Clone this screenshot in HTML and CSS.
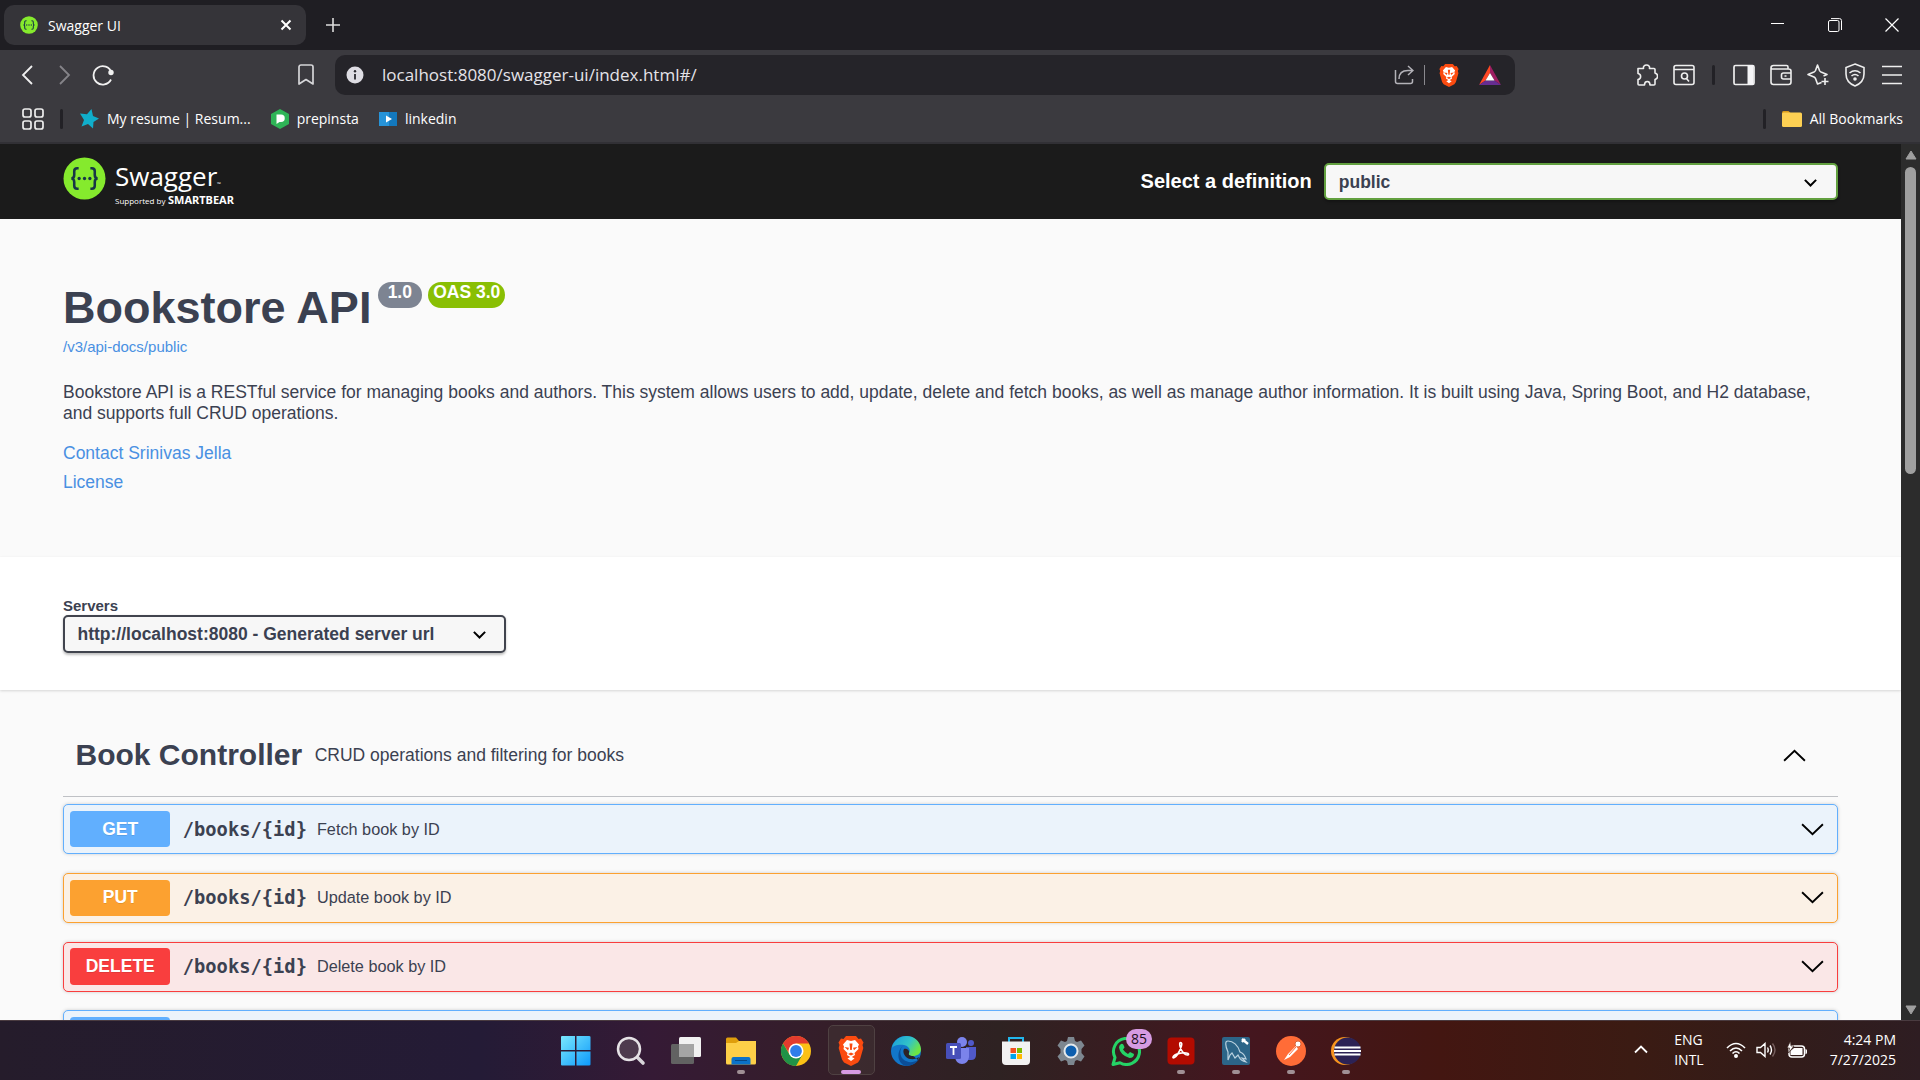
FILE: index.html
```html
<!DOCTYPE html>
<html lang="en">
<head>
<meta charset="utf-8">
<title>Swagger UI</title>
<link rel="stylesheet" href="styles.css">
</head>
<body>
<svg class="defs" width="0" height="0" aria-hidden="true">
  <symbol id="swagger-mark" viewBox="0 0 44 44">
    <circle cx="22" cy="22" r="21.500" fill="#85ea2d"/>
    <path d="M16 11.500h-1.500c-2 0-3 1-3 3v4c0 2-1 3.500-3 3.500 2 0 3 1.500 3 3.500v4c0 2 1 3 3 3H16M28 11.500h1.500c2 0 3 1 3 3v4c0 2 1 3.500 3 3.500-2 0-3 1.500-3 3.500v4c0 2-1 3-3 3H28" fill="none" stroke="#173647" stroke-width="2.600"/>
    <circle cx="16.500" cy="22" r="1.700" fill="#173647"/><circle cx="22" cy="22" r="1.700" fill="#173647"/><circle cx="27.500" cy="22" r="1.700" fill="#173647"/>
  </symbol>
  <symbol id="brave" viewBox="0 0 26 30">
    <path d="M8 0h10l2.500 3 2.500-.5 2.500 4-1 2.500.8 3L22 23.500l-2 3L13 30l-7-3.500-2-3L.7 12l.8-3-1-2.500 2.500-4 2.500.5z" fill="#fb4b10"/>
    <path d="M13 5l4-1 4 4.500-1 2 .5 2.500-4 4 .5 2-4 2.500-4-2.500.5-2-4-4 .5-2.500-1-2L9 4z" fill="#fff"/>
    <path d="M6.500 11l4.500.8-1 2.500zM19.500 11l-4.500.8 1 2.500zM11.500 7.500h3L13.800 14h-1.600zM10 18l3-1.500 3 1.500-3 1.500z" fill="#fb4b10"/>
    <path d="M9.500 22.500l3.500-2 3.500 2L13 25z" fill="#fff"/>
  </symbol>
  <symbol id="arrow-down" viewBox="0 0 24 14"><path d="M2 2l10 9.500L22 2" fill="none" stroke="#000" stroke-width="1.800"/></symbol>
  <symbol id="caret" viewBox="0 0 12 8"><path d="M1.500 1.500L6 6l4.500-4.500" fill="none" stroke="#000" stroke-width="1.600"/></symbol>
</svg>

<header class="browser">
  <div class="tabs">
    <div class="tab">
      <svg class="favicon" width="18" height="18"><use href="#swagger-mark"/></svg>
      <span class="tab-title">Swagger UI</span>
      <button class="tab-close" aria-label="Close tab"><svg width="12" height="12" viewBox="0 0 12 12"><path d="M1.500 1.500l9 9M10.500 1.500l-9 9" stroke="#fff" stroke-width="2"/></svg></button>
    </div>
    <button class="new-tab" aria-label="New tab"><svg width="14" height="14" viewBox="0 0 14 14"><path d="M7 0v14M0 7h14" stroke="#ddd" stroke-width="1.600"/></svg></button>
    <div class="window-controls">
      <button aria-label="Minimize"><svg width="14" height="14" viewBox="0 0 14 14"><path d="M0 5.500h13" stroke="#fff"/></svg></button>
      <button aria-label="Restore"><svg width="14" height="14" viewBox="0 0 14 14" fill="none" stroke="#fff"><rect x=".5" y="2.500" width="10.500" height="11" rx="1.500"/><path d="M3 .6h8.500a2 2 0 0 1 2 2V12"/></svg></button>
      <button aria-label="Close"><svg width="14" height="14" viewBox="0 0 14 14"><path d="M.5.500l13 13M13.500.500l-13 13" stroke="#fff" stroke-width="1.200"/></svg></button>
    </div>
  </div>

  <div class="toolbar">
    <div class="nav">
      <button aria-label="Back"><svg width="12" height="20" viewBox="0 0 12 20"><path d="M11 1L2 10l9 9" fill="none" stroke="#f0f0f0" stroke-width="1.800"/></svg></button>
      <button aria-label="Forward"><svg width="12" height="20" viewBox="0 0 12 20"><path d="M1 1l9 9-9 9" fill="none" stroke="#858489" stroke-width="1.800"/></svg></button>
      <button aria-label="Reload"><svg width="22" height="22" viewBox="0 0 22 22"><path d="M19.500 8.500A9.200 9.200 0 1 0 19 15.500" fill="none" stroke="#f0f0f0" stroke-width="1.800"/><circle cx="19" cy="8.500" r="2.700" fill="#f0f0f0"/></svg></button>
      <button class="bookmark" aria-label="Bookmark this tab"><svg width="16" height="22" viewBox="0 0 16 22"><path d="M1 20V3a2 2 0 0 1 2-2h10a2 2 0 0 1 2 2v17l-7-4.500z" fill="none" stroke="#d5d5d8" stroke-width="1.700" stroke-linejoin="round"/></svg></button>
    </div>
    <div class="address">
      <svg width="18" height="18" viewBox="0 0 18 18"><circle cx="9" cy="9" r="8.500" fill="#dedde3"/><path d="M9 8v5.500" stroke="#29282d" stroke-width="1.800"/><circle cx="9" cy="5.300" r="1.200" fill="#29282d"/></svg>
      <input type="text" aria-label="Address" value="localhost:8080/swagger-ui/index.html#/">
      <button aria-label="Share"><svg width="20" height="20" viewBox="0 0 20 20" fill="none" stroke="#b3b2b8" stroke-width="1.500"><path d="M1.500 5v11.500a2 2 0 0 0 2 2h13a2 2 0 0 0 2-2V14M5 14c0-5 3-8.500 9-8.500h5M14 1l5 4.500-5 4.500"/></svg></button>
      <span class="address-rule"></span>
      <button class="shields" aria-label="Brave Shields"><svg width="20" height="23"><use href="#brave"/></svg></button>
      <button class="rewards" aria-label="Rewards"><svg width="22" height="20" viewBox="0 0 22 20"><path d="M11 0L0 20l6.500-4.500L11 8z" fill="#ff4724"/><path d="M11 0l11 20-6.500-4.500L11 8z" fill="#9e1f63"/><path d="M0 20h22l-6.500-4.500h-9z" fill="#662d91"/><path d="M11 8l4.500 7.500h-9z" fill="#fff"/></svg></button>
    </div>
    <div class="actions">
      <button aria-label="Extensions"><svg width="22" height="22" viewBox="0 0 22 22" fill="none" stroke="#eee" stroke-width="1.600" stroke-linejoin="round"><path d="M2 4.500h5.500C7 2.500 8.500 1 10.500 1S14 2.500 13.500 4.500H18q1 0 1 1V9c3.500 1 3.500 5.500 0 6.500V20q0 1-1 1h-4c0-2.500-1-3.500-2.700-3.500S8.500 18.500 8.500 21H3q-1 0-1-1v-4.500c3.500-.5 3.500-5.500 0-6z"/></svg></button>
      <button aria-label="Search tabs"><svg width="22" height="22" viewBox="0 0 22 22" fill="none" stroke="#eee" stroke-width="1.600"><rect x="1" y="1.500" width="20" height="19" rx="2"/><path d="M1 5.500h20M13.500 14.500l2.500 3"/><circle cx="11.500" cy="12" r="3"/></svg></button>
      <span class="rule"></span>
      <button aria-label="Sidebar"><svg width="22" height="22" viewBox="0 0 22 22"><rect x="1" y="1.500" width="20" height="19" rx="1.500" fill="none" stroke="#eee" stroke-width="1.700"/><path d="M14.500 1h6v20h-6z" fill="#f5f5f7"/></svg></button>
      <button aria-label="Wallet"><svg width="22" height="22" viewBox="0 0 22 22" fill="none" stroke="#eee" stroke-width="1.600"><path d="M18 5V3q0-1.500-1.500-1.500h-13Q1 1.500 1 4v14q0 2.500 2.500 2.500h15q2.500 0 2.500-2.500V7q0-2-2.500-2H3Q1.500 5 1 4M21 9h-7.500q-2 0-2 2v2q0 2 2 2H21M14.500 12h2"/></svg></button>
      <button aria-label="Leo AI"><svg width="22" height="22" viewBox="0 0 22 22" fill="none" stroke="#eee" stroke-width="1.600" stroke-linejoin="round"><path d="M14.500 18.500L10.500 20 8.500 14.500Q8 13.500 7 13L1 10.500 7 8q1-.5 1.500-1.500l2-5.500 2 5.500Q13 7.500 14 8l6 2.500-3.500 1.500M18 14v7M14.500 17.500h7"/></svg></button>
      <button aria-label="VPN"><svg width="22" height="24" viewBox="0 0 22 24" fill="none" stroke="#eee" stroke-width="1.600"><path d="M11 1l9 3.500V11c0 6-4 10-9 12C6 21 2 17 2 11V4.500zM5.500 10q5.500-4.500 11 0M7.500 13q3.500-3 7 0"/><circle cx="11" cy="16" r="1" fill="#eee"/></svg></button>
      <button aria-label="Menu"><svg width="22" height="20" viewBox="0 0 22 20"><path d="M1 1.500h20M1 10h20M1 18.500h20" stroke="#eee" stroke-width="1.700"/></svg></button>
    </div>
  </div>

  <nav class="bookmarks">
    <button class="apps" aria-label="Apps"><svg width="22" height="22" viewBox="0 0 22 22" fill="none" stroke="#eee" stroke-width="1.700"><rect x="1" y="1" width="8" height="8" rx="2"/><rect x="13" y="1" width="8" height="8" rx="2"/><rect x="1" y="13" width="8" height="8" rx="2"/><rect x="13" y="13" width="8" height="8" rx="2"/></svg></button>
    <span class="rule"></span>
    <a href="#resume"><svg width="20" height="20" viewBox="0 0 20 20"><path d="M12.500 0l1.500 7 6 2.500-5.500 3.500-.5 6.500-5-4.500-6.500 2.500L5 11 1 4.500l7 .8z" fill="#10aecb"/></svg>My resume | Resum...</a>
    <a href="#prepinsta"><svg width="18" height="20" viewBox="0 0 18 20"><path d="M9 0l9 5v10l-9 5-9-5V5z" fill="#2fb457"/><path d="M5.500 5.500H10a3.500 3.500 0 0 1 0 7.500H8.500L5.500 15z" fill="#fff"/></svg>prepinsta</a>
    <a href="#linkedin"><svg width="18" height="14" viewBox="0 0 18 14"><path d="M0 0h18v14H0z" fill="#1378bd"/><path d="M0 0h10v14H0z" fill="#2793d8"/><path d="M7 3.500l6 3.500-6 3.500z" fill="#fff"/></svg>linkedin</a>
    <span class="rule push"></span>
    <a class="all" href="#bookmarks"><svg width="20" height="16" viewBox="0 0 20 16"><path d="M0 1.500Q0 0 1.500 0h5L8.500 2v4H0z" fill="#d99b1c"/><rect y="1.500" width="20" height="14.500" rx="1.500" fill="#fdd053"/></svg>All Bookmarks</a>
  </nav>
</header>

<div class="viewport">
  <main class="swagger">
    <div class="topbar">
      <div class="wrapper topbar-row">
        <a class="logo" href="#/" aria-label="Swagger">
          <svg width="144" height="44" viewBox="0 0 180 55">
            <use href="#swagger-mark" x="0" y="3" width="43" height="43"/>
            <text x="52" y="32" class="logo-name">Swagger</text>
            <text x="154" y="32" class="logo-tm">™</text>
            <text x="52" y="50" class="logo-by">Supported by</text>
            <text x="105" y="50" class="logo-bear">SMARTBEAR</text>
          </svg>
        </a>
        <label class="definition" for="definition">Select a definition</label>
        <span class="select definition-select">
          <select id="definition"><option>public</option></select>
          <svg width="12" height="8"><use href="#caret"/></svg>
        </span>
      </div>
    </div>

    <section class="wrapper info">
      <h1>Bookstore API <span class="badges"><span class="badge">1.0</span><span class="badge oas">OAS 3.0</span></span></h1>
      <a class="docs" href="#/v3/api-docs/public">/v3/api-docs/public</a>
      <p>Bookstore API is a RESTful service for managing books and authors. This system allows users to add, update, delete and fetch books, as well as manage author information. It is built using Java, Spring Boot, and H2 database, and supports full CRUD operations.</p>
      <a class="meta" href="#contact">Contact Srinivas Jella</a>
      <a class="meta" href="#license">License</a>
    </section>

    <section class="servers">
      <div class="wrapper">
        <label for="servers">Servers</label>
        <span class="select server-select">
          <select id="servers"><option>http://localhost:8080 - Generated server url</option></select>
          <svg width="12" height="8"><use href="#caret"/></svg>
        </span>
      </div>
    </section>

    <section class="wrapper operations">
      <div class="tag">
        <h2>Book Controller</h2>
        <p>CRUD operations and filtering for books</p>
        <button aria-label="Collapse"><svg class="flip" width="20" height="12"><use href="#arrow-down"/></svg></button>
      </div>
      <div class="op get"><button class="method">GET</button><code>/books/{id}</code><span>Fetch book by ID</span><button class="expand" aria-label="Expand"><svg width="20" height="12"><use href="#arrow-down"/></svg></button></div>
      <div class="op put"><button class="method">PUT</button><code>/books/{id}</code><span>Update book by ID</span><button class="expand" aria-label="Expand"><svg width="20" height="12"><use href="#arrow-down"/></svg></button></div>
      <div class="op delete"><button class="method">DELETE</button><code>/books/{id}</code><span>Delete book by ID</span><button class="expand" aria-label="Expand"><svg width="20" height="12"><use href="#arrow-down"/></svg></button></div>
      <div class="op get"><button class="method" aria-label="Operation"></button></div>
    </section>
  </main>
  <div class="scrollbar">
    <svg width="12" height="10" viewBox="0 0 12 10"><path d="M6 1l5 8H1z" fill="#9f9f9f" stroke="#9f9f9f" stroke-linejoin="round"/></svg>
    <div class="track"><div class="thumb"></div></div>
    <svg width="12" height="10" viewBox="0 0 12 10"><path d="M6 9l5-8H1z" fill="#9f9f9f" stroke="#9f9f9f" stroke-linejoin="round"/></svg>
  </div>
</div>

<footer class="taskbar">
  <div class="apps-row">
    <button aria-label="Start"><svg width="30" height="30" viewBox="0 0 30 30"><defs><linearGradient id="win" x2="1" y2="1"><stop stop-color="#7ae8fd"/><stop offset="1" stop-color="#0d99fb"/></linearGradient></defs><path d="M0 1q0-1 1-1h13v14H0zM15.500 0H28q1.500 0 1.500 1v13h-14zM0 15.500h14v14H1q-1 0-1-1zM15.500 15.500h14v13q0 1-1.500 1H15.500z" fill="url(#win)"/></svg></button>
    <button aria-label="Search"><svg width="30" height="30" viewBox="0 0 30 30"><path d="M20 20l7 7" stroke="#d8d5da" stroke-width="3.600" stroke-linecap="round"/><circle cx="13" cy="13" r="11" fill="#4e3a4e" stroke="#e6e2e6" stroke-width="2.500"/></svg></button>
    <button aria-label="Task view"><svg width="32" height="30" viewBox="0 0 32 30"><rect x="9" y="1" width="22" height="20" rx="1.500" fill="#f1f1f1"/><rect x="1" y="8" width="23" height="20" rx="1.500" fill="#626262"/><path d="M9 8h15v13H9z" fill="#a5a5a5"/></svg></button>
    <button class="running" aria-label="File Explorer"><svg width="30" height="28" viewBox="0 0 30 28"><path d="M0 2q0-1.500 1.500-1.500H10L13 4v8H0z" fill="#df9e0c"/><path d="M0 6h10l3-2h17v22q0 1.500-1.500 1.500h-27Q0 27.500 0 26z" fill="#fdcf48"/><path d="M5.500 27.500V22q0-2 2-2h15q2 0 2 2v5.500z" fill="#0b72c9"/><path d="M9 23.500h12" stroke="#074886"/></svg></button>
    <button aria-label="Chrome"><svg width="30" height="30" viewBox="0 0 30 30"><circle cx="15" cy="15" r="15" fill="#fbc116"/><path d="M2 7.500A15 15 0 0 1 28 7.500H15L9 18.500z" fill="#e33b2e"/><path d="M2 7.500A15 15 0 0 0 15 30l6.500-11.500-13 0z" fill="#209247"/><circle cx="15" cy="15" r="7.500" fill="#fff"/><circle cx="15" cy="15" r="5.900" fill="#2f7de9"/></svg></button>
    <button class="running active" aria-label="Brave"><svg width="26" height="30"><use href="#brave"/></svg></button>
    <button aria-label="Edge"><svg width="30" height="30" viewBox="0 0 30 30"><defs><linearGradient id="edge" x2="1" y2=".5"><stop stop-color="#189bdb"/><stop offset=".6" stop-color="#32c3c8"/><stop offset="1" stop-color="#6de544"/></linearGradient></defs><circle cx="15" cy="15" r="15" fill="#1276c9"/><path d="M1 12C4-4 28-4 30 13c0 5-4 7-8 7-3 0-5-1-4-3C20 14 18 10 13 9 7 8 2 10 1 12z" fill="url(#edge)"/><path d="M12 10C9 12 8 19 12 23s10 4 15 1l1-1C26 27 21 30 15 30 6 28 5 15 12 10z" fill="#0b4e98"/><path d="M13 13c-2 3 1 9 6 10 4 .6 7-.5 9-2l-1 3c-1-.5-3-3-5-4-3 0-5-1-4-3 1-2-2-5-5-4z" fill="#2c2227"/></svg></button>
    <button aria-label="Teams"><svg width="30" height="28" viewBox="0 0 30 28"><circle cx="25" cy="6" r="3" fill="#5059c9"/><circle cx="16" cy="5" r="5" fill="#7b83eb"/><path d="M20 10h10v8q0 5-5 5h-5z" fill="#5059c9"/><path d="M9 11h14v9q-1 7-7 7t-7-7z" fill="#7b83eb"/><rect y="6" width="15" height="16" rx="1.500" fill="#474fb9"/><path d="M4 10h7M7.500 10v8" stroke="#fff" stroke-width="1.800"/></svg></button>
    <button aria-label="Store"><svg width="30" height="30" viewBox="0 0 30 30"><path d="M8 7V2h14v5" fill="none" stroke="#21b6ec" stroke-width="2"/><path d="M1 5.500h28V25q0 4-4 4H5q-4 0-4-4z" fill="#f2f2f2"/><path d="M9.500 12H15v5H9.500z" fill="#f25022"/><path d="M16 12h5v5h-5z" fill="#7fba00"/><path d="M9.500 18H15v5H9.500z" fill="#00a4ef"/><path d="M16 18h5v5h-5z" fill="#ffb900"/></svg></button>
    <button aria-label="Settings"><svg width="30" height="30" viewBox="0 0 30 30"><path d="M12 1h6l1 4 2 1 4-1.500 3.500 5L25.500 13v4l3 3.500-3.500 5L21 24l-2 1-1 4h-6l-1-4-2-1-4 1.500-3.500-5 3-3.500v-4l-3-3.500 3.500-5L9 6l2-1z" fill="#7d8790"/><circle cx="15" cy="15" r="6.500" fill="#0d5fae" stroke="#e4e9ec" stroke-width="2"/></svg></button>
    <button aria-label="WhatsApp, 85 unread"><svg width="30" height="30" viewBox="0 0 30 30"><path d="M2 28.500l2-7A13 13 0 1 1 9 26.700z" fill="none" stroke="#25d366" stroke-width="3" stroke-linejoin="round"/><path d="M10 8q2-1 3 2l.5 1.500L12 13.500q2 3 5 4.500l2-2 4 2q0 4-4.500 4Q9 19 8 11.500 8 9 10 8z" fill="#25d366"/></svg><span class="count">85</span></button>
    <button class="running" aria-label="Acrobat"><svg width="28" height="28" viewBox="0 0 28 28"><rect x=".5" y=".5" width="27" height="27" rx="4" fill="#b30b00"/><path d="M13.500 5.500c3 0 0 7-3 12-2 3-5 4.500-4.500 2.500 1-3 11-5.500 15-3.500 2 1.500-1.500 2.500-4 0-3.500-3-5.500-11-3.500-11z" fill="none" stroke="#fff" stroke-width="1.600"/></svg></button>
    <button class="running" aria-label="MySQL Workbench"><svg width="30" height="30" viewBox="0 0 30 30"><rect x="1" y="1" width="28" height="28" rx="2" fill="#2c6588"/><path d="M7 24V16C4 9 4 5 7 5c5 0 10 4 12 11 3 1 5 4 6 7l-4-1 4 4c-6-1-7-5-8-7l-3 3-3-5-2 2z" fill="none" stroke="#b9d1df" stroke-width="1.200"/><path d="M21 3l6 5M21 6l3-3" stroke="#fff" stroke-width="2.400"/></svg></button>
    <button class="running" aria-label="Postman"><svg width="30" height="30" viewBox="0 0 30 30"><circle cx="15" cy="15" r="15" fill="#ff6c37"/><circle cx="22" cy="8" r="3" fill="#fff" stroke="#d7643b"/><path d="M20 10l2 3-8 8-6 3 4-6z" fill="#fff"/><path d="M13 19l7-8" stroke="#ff6c37"/></svg></button>
    <button class="running" aria-label="Eclipse"><svg width="30" height="30" viewBox="0 0 30 30"><circle cx="14" cy="15" r="14" fill="#f7941e"/><circle cx="16.500" cy="15" r="13.500" fill="#2c2255"/><path d="M3.500 11.500h26M3 15h27M3.500 18.500h26" stroke="#fff" stroke-width="1.800"/></svg></button>
  </div>
  <div class="tray">
    <button aria-label="Hidden icons"><svg width="14" height="9" viewBox="0 0 14 9"><path d="M1 7.500l6-6 6 6" fill="none" stroke="#fff" stroke-width="1.800"/></svg></button>
    <div class="language"><span>ENG</span><span>INTL</span></div>
    <svg width="20" height="16" viewBox="0 0 20 16" fill="none" stroke="#fff" stroke-width="1.600"><path d="M1 6q9-9 18 0M4 9q6-6 12 0M6.500 11.500q3.500-3.500 7 0"/><circle cx="10" cy="14" r="1.200" fill="#fff"/></svg>
    <svg class="volume" width="20" height="16" viewBox="0 0 20 16" fill="none" stroke="#fff" stroke-width="1.400"><path d="M1 5.500h3.500L9 1.500v13L4.500 10.500H1zM11.500 5.500q1.500 2.500 0 5M14 3.500q3 4.500 0 9"/><path d="M16.500 1.500q5 6.500 0 13" stroke="#765f5e"/></svg>
    <svg class="battery" width="22" height="18" viewBox="0 0 22 18"><rect x="3" y="5" width="15.500" height="11" rx="3" fill="none" stroke="#fff" stroke-width="1.500"/><path d="M8 7h8.500v7h-12V10zM19.500 8q1.500 0 1.500 1.500v2Q21 13 19.500 13z" fill="#fff"/><path d="M4.500 0L1 7h2.500L2.500 12 8 5H5z" fill="#fff" stroke="#331c19" stroke-width=".7"/></svg>
    <div class="clock"><span>4:24 PM</span><span>7/27/2025</span></div>
  </div>
</footer>
</body>
</html>
```

FILE: styles.css
```css
* { box-sizing: border-box; }

body {
  margin: 0;
  height: 100vh;
  display: flex;
  flex-direction: column;
  overflow: hidden;
  font-family: "Open Sans", "Noto Sans", sans-serif;
  font-size: 14px;
  color: #fff;
}

.defs { position: absolute; }
svg { display: block; flex: none; }
h1, h2, p { margin: 0; }
a { text-decoration: none; }

button {
  display: flex;
  align-items: center;
  justify-content: center;
  padding: 0;
  border: 0;
  background: none;
  color: inherit;
  font: inherit;
}

/* Browser chrome */
.browser { background: #3b3a3f; border-bottom: 2px solid #313035; }

.tabs {
  display: flex;
  align-items: center;
  height: 50px;
  padding-left: 4px;
  background: #1f1e23;
}

.tab {
  display: flex;
  align-items: center;
  gap: 10px;
  width: 302px;
  height: 40px;
  padding: 0 14px 0 16px;
  border-radius: 10px;
  background: #353439;
}
.tab-close { margin-left: auto; }
.new-tab { width: 54px; height: 40px; }
.window-controls { display: flex; margin-left: auto; }
.window-controls button { width: 57px; height: 50px; }

.toolbar { display: flex; align-items: center; padding-top: 5px; }
.nav, .actions { display: flex; align-items: center; }
.nav { width: 335px; padding: 0 10px 0 8px; }
.nav button { width: 38px; height: 40px; }
.nav .bookmark { margin-left: auto; }
.actions { width: 405px; padding-right: 10px; justify-content: flex-end; }
.actions button { width: 37px; height: 40px; }

.rule { width: 3px; height: 20px; border-radius: 2px; background: #222126; }
.actions .rule { margin: 0 10px; }

.address {
  display: flex;
  flex: 1;
  align-items: center;
  height: 40px;
  padding: 0 14px 0 11px;
  border-radius: 10px;
  background: #252429;
}
.address input {
  flex: 1;
  min-width: 0;
  height: 24px;
  margin: 0 0 2px 18px;
  padding: 0;
  border: 0;
  outline: 0;
  background: none;
  color: #e4e3e8;
  font: inherit;
  font-size: 17px;
}
.address-rule { width: 1px; height: 20px; margin: 0 14px 0 10px; background: #8a898e; }
.rewards { margin-left: 20px; }

.bookmarks {
  display: flex;
  align-items: center;
  height: 47px;
  padding: 0 17px 0 22px;
}
.bookmarks a {
  display: flex;
  align-items: center;
  gap: 8px;
  margin-right: 20px;
  color: #fff;
}
.apps { margin-right: 16px; }
.bookmarks .rule { margin-right: 16px; }
.bookmarks .push { margin-left: auto; }
.bookmarks .all { margin-right: 0; }

/* Page area */
.viewport { display: flex; flex: 1; min-height: 0; }

.swagger {
  flex: 1;
  min-width: 0;
  overflow: hidden;
  zoom: 1.25;
  background: #fafafa;
  color: #3b4151;
  font-family: "Liberation Sans", Arial, sans-serif;
  font-size: 14px;
}

.wrapper { max-width: 1460px; margin: 0 auto; padding: 0 20px; }

.topbar { padding: 8px 0; background: #1b1b1b; color: #fff; }
.topbar-row { display: flex; align-items: center; }
.logo-name { font: 400 26px "Open Sans", sans-serif; fill: #fff; }
.logo-tm { font: 5px "Open Sans", sans-serif; fill: #fff; }
.logo-by { font: 8px "Open Sans", sans-serif; fill: #fff; }
.logo-bear { font: 700 11px "Noto Sans", sans-serif; fill: #fff; }
.definition { margin-left: auto; margin-right: 10px; font-size: 16px; font-weight: 700; }

.select { display: flex; position: relative; }
.select select {
  width: 100%;
  height: 30px;
  padding: 0 40px 0 10px;
  border: 2px solid #41444e;
  border-radius: 4px;
  appearance: none;
  background: #f7f7f7;
  box-shadow: 0 1px 2px rgba(0, 0, 0, .25);
  color: #3b4151;
  font: 700 14px "Liberation Sans", Arial, sans-serif;
}
.select svg { position: absolute; right: 16px; top: 12px; }
.definition-select { width: 411px; }
.definition-select select { border-color: #62a03f; }
.server-select { width: 354px; }
.server-select svg { right: 15px; }

.info { padding-top: 50px; padding-bottom: 48px; }
.info h1 { display: flex; font-size: 36px; line-height: 42px; }
.badges { display: flex; align-items: flex-start; gap: 5px; margin-left: 5px; }
.badge {
  padding: 0 8px 4px;
  border-radius: 57px;
  background: #7d8492;
  color: #fff;
  font-size: 14px;
  line-height: 17px;
}
.badge.oas { padding: 0 4px 4px; background: #89bf04; }
.info a { display: block; color: #4990e2; }
.info .docs { padding-top: 3px; font-size: 12px; line-height: 14px; }
.info p { margin: 21px 0 12px; line-height: 17px; }
.info .meta { line-height: 23px; }

.servers {
  padding: 32px 0 30px;
  background: #fff;
  box-shadow: 0 1px 2px rgba(0, 0, 0, .15);
}
.servers label { display: block; font-size: 12px; font-weight: 700; line-height: 15px; }

.operations { padding-top: 20px; }
.tag {
  display: flex;
  align-items: center;
  height: 65px;
  margin-bottom: 6px;
  padding: 0 25px 0 10px;
  border-bottom: 1px solid #bfc1c5;
}
.tag h2 { margin-right: 10px; font-size: 24px; }
.tag button { margin-left: auto; }
.flip { transform: rotate(180deg); }

.op {
  display: flex;
  align-items: center;
  height: 40px;
  margin-bottom: 15px;
  padding: 0 10px 0 5px;
  border: 1px solid;
  border-radius: 4px;
  box-shadow: 0 0 3px rgba(0, 0, 0, .19);
  font-size: 13px;
}
.method {
  width: 80px;
  height: 29px;
  border-radius: 3px;
  color: #fff;
  font-size: 14px;
  font-weight: 700;
  text-shadow: 0 1px 0 rgba(0, 0, 0, .1);
}
.op code { margin: 0 8px 0 10px; font: 700 15px "DejaVu Sans Mono", monospace; }
.expand { margin-left: auto; }
.get { border-color: #61affe; background: #ebf3fb; }
.get .method { background: #61affe; }
.put { border-color: #fca130; background: #fbf1e6; }
.put .method { background: #fca130; }
.delete { border-color: #f93e3e; background: #fae7e7; }
.delete .method { background: #f93e3e; }

.scrollbar {
  display: flex;
  flex-direction: column;
  align-items: center;
  gap: 7px;
  width: 19px;
  padding: 6px 0 5px;
  background: #2c2c2c;
}
.track { flex: 1; }
.thumb { width: 11px; height: 37%; border-radius: 6px; background: #9f9f9f; }

/* Taskbar */
.taskbar {
  display: grid;
  grid-template-columns: 1fr auto 1fr;
  height: 60px;
  border-top: 1px solid #4a3b40;
  background: linear-gradient(90deg, #251c2b 0%, #241b36 25%, #351a35 34%, #351e29 43%, #2e2222 52%, #44161f 65%, #431611 75%, #3b1b13 85%, #331c19 92%, #2e1d22 100%);
}
.apps-row { display: flex; grid-column: 2; padding-left: 1px; }
.apps-row button { position: relative; width: 55px; height: 59px; }
.running::after {
  content: "";
  position: absolute;
  bottom: 6px;
  width: 8px;
  height: 4px;
  border-radius: 2px;
  background: #a09095;
}
.apps-row .active::after { width: 20px; background: #d69be2; }
.apps-row .active::before {
  content: "";
  position: absolute;
  inset: 4px 3px 5px 5px;
  border: 1px solid #4f4142;
  border-radius: 5px;
  background: #43353680;
}
.active svg { position: relative; }
.count {
  position: absolute;
  top: 8px;
  right: 1px;
  width: 26px;
  border-radius: 10px;
  background: #d69be2;
  color: #1d1020;
  font-size: 14px;
  line-height: 20px;
}

.tray {
  display: flex;
  align-items: center;
  justify-content: flex-end;
  padding: 0 24px 2px 0;
  line-height: 20px;
}
.language, .clock { display: flex; flex-direction: column; }
.language { margin: 0 22px 0 26px; }
.volume { margin: 0 10px; }
.clock { margin-left: 22px; align-items: flex-end; }
```
